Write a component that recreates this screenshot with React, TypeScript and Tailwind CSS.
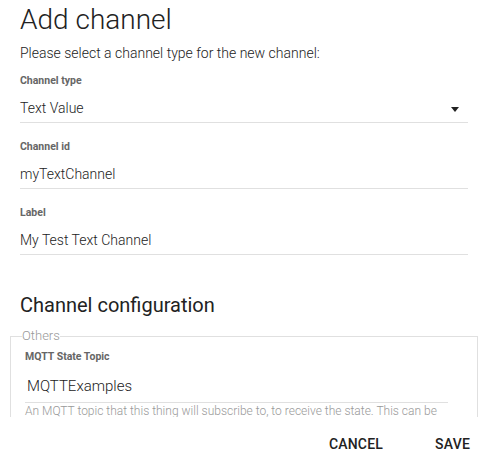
const Field = ({ label, value, first }: { label: string; value: string; first?: boolean }) => (
  <div className={first ? 'mt-[12px]' : 'mt-[17px]'}>
    <label className="block text-[10.5px] font-bold text-[#666] leading-[14px]">{label}</label>
    <div className="mt-[10px] pb-[4px] border-b border-[#e0e0e0] text-[14px] font-light leading-[20px] text-[#222]">
      {value}
    </div>
  </div>
);

const App = () => {
  return (
    <div className="w-[495px] h-[461px] bg-white font-['Roboto',sans-serif] overflow-hidden">
      <div className="h-[417px] overflow-hidden pl-5 pr-[27px]">
        <h1 className="pt-[3px] text-[28px] font-light leading-[34px] text-[#222]">Add channel</h1>
        <p className="mt-[7px] text-[14px] font-light leading-[18px] text-[#222]">
          Please select a channel type for the new channel:
        </p>

        <div className="mt-[12px]">
          <label className="block text-[10.5px] font-bold text-[#666] leading-[14px]">Channel type</label>
          <div className="mt-[10px] pb-[4px] border-b border-[#e0e0e0] text-[14px] font-light leading-[20px] text-[#222] flex items-center justify-between">
            <span>Text Value</span>
            <svg width="8" height="5" viewBox="0 0 8 5" className="mr-[9px] mt-[3px]">
              <path d="M0 0 L8 0 L4 5 Z" fill="#222" />
            </svg>
          </div>
        </div>

        <Field label="Channel id" value="myTextChannel" />
        <Field label="Label" value="My Test Text Channel" />

        <h2 className="mt-[38px] text-[20px] leading-[24px] text-[#222]">Channel configuration</h2>

        <fieldset className="mt-[11px] -ml-[10px] -mr-[10px] border border-[#e0e0e0] pl-[14px] pr-[29px] pb-4">
          <legend className="-ml-[3px] text-[13px] font-light leading-[16px] text-[#999]">Others</legend>
          <label className="block mt-[6px] text-[10.5px] font-bold text-[#666] leading-[14px]">MQTT State Topic</label>
          <div className="mt-[12px] pb-[6px] border-b border-[#e0e0e0] text-[15px] font-light leading-[20px] text-[#222] pl-[2px]">
            MQTTExamples
          </div>
          <p className="text-[12px] font-light leading-[17px] text-[#999]">
            An MQTT topic that this thing will subscribe to, to receive the state. This can be
            left empty, the channel will be state-less command-only channel then.
          </p>
        </fieldset>
      </div>

      <div className="flex justify-end gap-[52px] pr-[25px] pt-[19px]">
        <button className="text-[14px] font-medium leading-[16px] text-[#222] tracking-[0.2px]">CANCEL</button>
        <button className="text-[14px] font-medium leading-[16px] text-[#222] tracking-[0.2px]">SAVE</button>
      </div>
    </div>
  );
};

export default App;
